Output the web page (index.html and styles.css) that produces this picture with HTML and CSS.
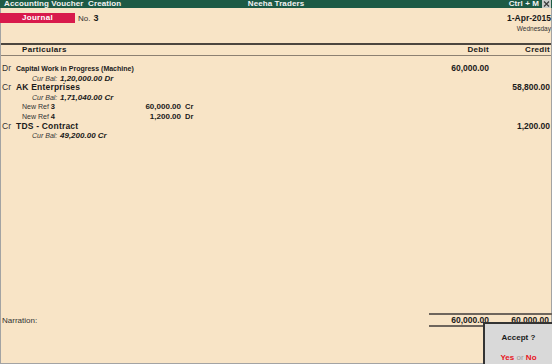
FILE: index.html
```html
<!DOCTYPE html>
<html>
<head>
<meta charset="utf-8">
<link rel="stylesheet" href="styles.css">
</head>
<body>
<div class="titlebar">
  <span class="tb-left">Accounting Voucher&nbsp; Creation</span>
  <span class="tb-center">Neeha Traders</span>
  <span class="tb-right">Ctrl + M <svg class="close" width="9" height="8" viewBox="0 0 9 8"><rect x="0" y="0" width="9" height="8" fill="#c9ccc9"/><path d="M2 1.5 L7 6.5 M7 1.5 L2 6.5" stroke="#3a3a3a" stroke-width="1.2"/></svg></span>
</div>
<div class="frame">
  <div class="vhead">
    <div class="vtype">
      <span class="journal">Journal</span>
      <span class="no">No.</span>
      <b class="vno">3</b>
    </div>
    <div class="vdate">
      <div class="date">1-Apr-2015</div>
      <div class="day">Wednesday</div>
    </div>
  </div>

  <div class="colhead">
    <span class="ch-part">Particulars</span>
    <span class="ch-amt">Debit</span>
    <span class="ch-amt ch-cr">Credit</span>
  </div>

  <div class="entries">
    <div class="row">
      <span class="ledger"><span class="drcr">Dr</span><b class="name name-small">Capital Work in Progress (Machine)</b></span>
      <b class="amt">60,000.00</b>
      <span class="amt amt-cr"></span>
    </div>
    <div class="row">
      <span class="curbal"><i class="cb-label">Cur Bal:</i><b class="cb-val">1,20,000.00 Dr</b></span>
    </div>
    <div class="row">
      <span class="ledger"><span class="drcr">Cr</span><b class="name">AK Enterprises</b></span>
      <span class="amt"></span>
      <b class="amt amt-cr">58,800.00</b>
    </div>
    <div class="row">
      <span class="curbal"><i class="cb-label">Cur Bal:</i><b class="cb-val">1,71,040.00 Cr</b></span>
    </div>
    <div class="row">
      <span class="bill"><span class="bill-ref">New Ref <b>3</b></span><b class="bill-amt">60,000.00</b><b class="bill-dc">Cr</b></span>
    </div>
    <div class="row">
      <span class="bill"><span class="bill-ref">New Ref <b>4</b></span><b class="bill-amt">1,200.00</b><b class="bill-dc">Dr</b></span>
    </div>
    <div class="row">
      <span class="ledger"><span class="drcr">Cr</span><b class="name">TDS - Contract</b></span>
      <span class="amt"></span>
      <b class="amt amt-cr">1,200.00</b>
    </div>
    <div class="row">
      <span class="curbal"><i class="cb-label">Cur Bal:</i><b class="cb-val">49,200.00 Cr</b></span>
    </div>
  </div>

  <div class="footer">
    <span class="narration">Narration:</span>
    <div class="totals">
      <b class="tot">60,000.00</b>
      <b class="tot tot-cr">60,000.00</b>
    </div>
  </div>

  <div class="accept">
    <div class="acc-q">Accept ?</div>
    <div class="acc-opts"><b class="red">Yes</b> <span class="or">or</span> <b class="red">No</b></div>
  </div>
</div>
</body>
</html>
```

FILE: styles.css
```css
* { box-sizing: border-box; }
html, body {
  margin: 0;
  padding: 0;
}
body {
  width: 552px;
  height: 364px;
  overflow: hidden;
  background: #f8e4c6;
  font-family: "Liberation Sans", Arial, sans-serif;
  color: #1a1a1a;
  display: flex;
  flex-direction: column;
}
b { font-weight: bold; }

.titlebar {
  height: 8px;
  background: #1d5a45;
  color: #f2f2f2;
  font-size: 8px;
  font-weight: bold;
  line-height: 8px;
  display: grid;
  grid-template-columns: 1fr auto 1fr;
  white-space: nowrap;
  letter-spacing: 0.1px;
}
.tb-left { padding-left: 4px; }
.tb-center { text-align: center; }
.tb-right {
  display: flex;
  justify-content: flex-end;
  align-items: center;
  gap: 3px;
  padding-right: 1px;
}
.close { display: block; }

.frame {
  position: relative;
  flex: 1;
  display: flex;
  flex-direction: column;
  border-left: 1px solid #a3a3a3;
  border-right: 1px solid #a3a3a3;
  border-bottom: 1px solid #a3a3a3;
}

.vhead {
  height: 35px;
  display: flex;
  justify-content: space-between;
  align-items: flex-start;
}
.vtype {
  margin-top: 5px;
  display: flex;
  align-items: center;
  height: 10px;
}
.journal {
  margin-left: -1px;
  width: 75px;
  height: 10px;
  background: #d81a4c;
  color: #fff;
  font-size: 8px;
  font-weight: bold;
  line-height: 10px;
  text-align: center;
  letter-spacing: 0.3px;
}
.no {
  margin-left: 3px;
  font-size: 8px;
  color: #333;
}
.vno {
  margin-left: 3px;
  font-size: 9px;
}
.vdate {
  margin-top: 5px;
  text-align: right;
}
.date {
  font-size: 8.5px;
  font-weight: bold;
  line-height: 10px;
}
.day {
  margin-top: 2px;
  font-size: 6.5px;
  line-height: 8px;
  color: #333;
}

.colhead {
  display: grid;
  grid-template-columns: 1fr 62px 62px;
  height: 13px;
  border-top: 2px solid #4c463f;
  border-bottom: 1px solid #8c8072;
  font-size: 8px;
  font-weight: bold;
  line-height: 10px;
  letter-spacing: 0.3px;
}
.ch-part { padding-left: 21px; }
.ch-amt { text-align: right; }
.ch-cr { padding-right: 1px; }

.entries {
  flex: 1;
  padding-top: 8px;
}
.row {
  display: grid;
  grid-template-columns: 1fr 62px 62px;
  height: 9.6px;
  line-height: 9.6px;
  white-space: nowrap;
}
.ledger {
  display: flex;
  align-items: baseline;
}
.drcr {
  flex: none;
  width: 15px;
  padding-left: 1px;
  font-size: 8.5px;
  color: #333;
}
.name {
  font-size: 8.5px;
  letter-spacing: 0.2px;
}
.name-small {
  font-size: 7px;
  letter-spacing: 0;
}
.amt {
  text-align: right;
  font-size: 8.5px;
}
.amt-cr { padding-right: 1px; }

.curbal {
  grid-column: 1 / 4;
  padding-left: 31px;
  display: flex;
  align-items: baseline;
}
.cb-label {
  flex: none;
  width: 28px;
  font-size: 7px;
  color: #333;
}
.cb-val {
  flex: none;
  font-style: italic;
  font-size: 8px;
}

.bill {
  grid-column: 1 / 4;
  padding-left: 21px;
  display: flex;
  align-items: baseline;
}
.bill-ref {
  flex: none;
  width: 100px;
  font-size: 7px;
  color: #333;
}
.bill-ref b { color: #1a1a1a; font-size: 7.5px; }
.bill-amt {
  flex: none;
  width: 59px;
  text-align: right;
  font-size: 8px;
}
.bill-dc {
  margin-left: 4px;
  font-size: 7.5px;
}

.footer {
  display: flex;
  align-items: center;
  margin-bottom: 36px;
}
.narration {
  flex: 1;
  padding-left: 1px;
  font-size: 8px;
  color: #333;
}
.totals {
  display: grid;
  grid-template-columns: 60px 62px;
  width: 123px;
  margin-right: -1px;
  height: 14px;
  border-top: 2px solid #6e655c;
  border-bottom: 2px solid #6e655c;
  line-height: 10px;
}
.tot {
  text-align: right;
  font-size: 8.5px;
}
.tot-cr { padding-right: 2px; }

.accept {
  position: absolute;
  left: 482px;
  top: 314px;
  right: -1px;
  bottom: -1px;
  background: #d9d9d9;
  border-left: 2px solid #333;
  border-top: 2px solid #333;
  text-align: center;
}
.acc-q {
  margin-top: 9px;
  font-size: 8px;
  font-weight: bold;
  line-height: 10px;
}
.acc-opts {
  margin-top: 10px;
  font-size: 8px;
  line-height: 10px;
}
.red { color: #e8141c; }
.or { color: #9a9a9a; }
```
